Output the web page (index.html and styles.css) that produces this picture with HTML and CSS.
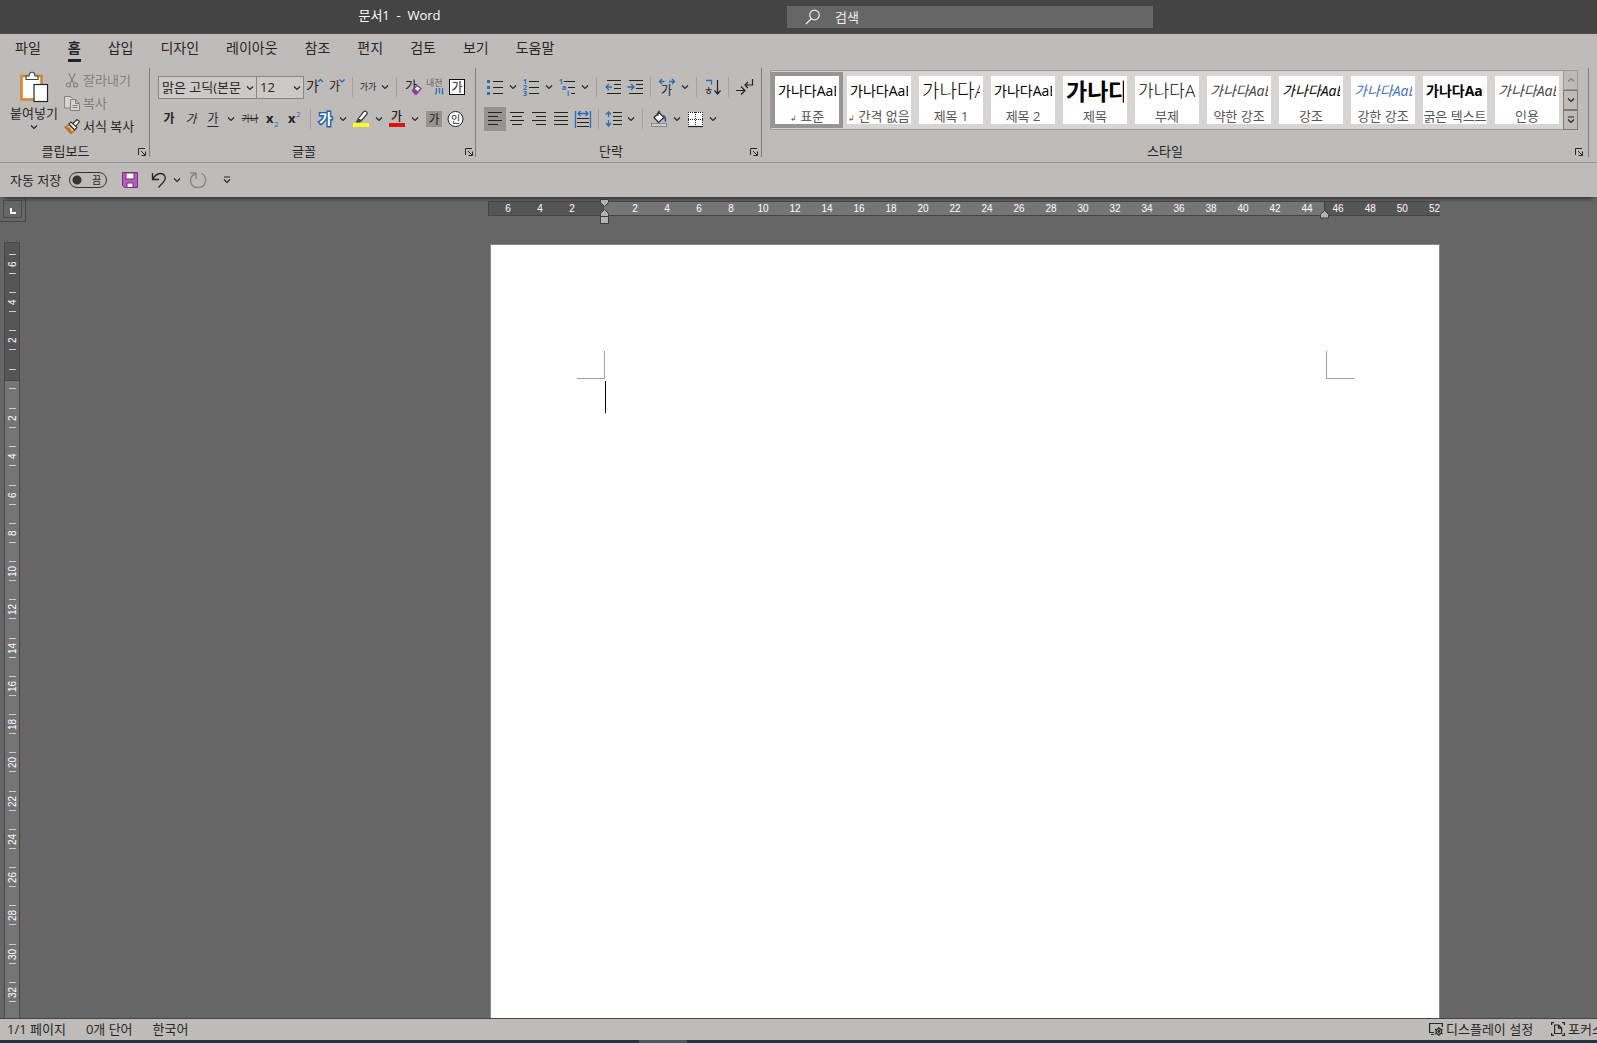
FILE: index.html
```html
<!DOCTYPE html>
<html lang="ko">
<head>
    <meta charset="UTF-8">
    <meta name="viewport" content="width=device-width, initial-scale=1.0">
    <title>문서1 - Word</title>
    <link rel="stylesheet" href="styles.css">
</head>
<body>
    <svg class="defs" aria-hidden="true">
        <symbol id="chev" viewBox="0 0 8 6"><path d="M1 1.500l3 3 3-3" fill="none" stroke="currentColor" stroke-width="1.200"/></symbol>
        <symbol id="more" viewBox="0 0 8 8"><path d="M1 1h6M1 3.500l3 3 3-3" fill="none" stroke="currentColor" stroke-width="1.200"/></symbol>
        <symbol id="launch" viewBox="0 0 8 8"><path d="M.5 7V.5H7M3 3l4 4M7.500 3.500v4h-4" fill="none" stroke="currentColor"/></symbol>
    </svg>

    <header class="titlebar">
        <h1 class="doc-title">문서1  -  Word</h1>
        <label class="search">
            <svg width="16" height="16" viewBox="0 0 16 16"><path d="M1 15l5.500-5.500" stroke="#eee" stroke-width="1.300"/><circle cx="9.500" cy="6" r="4.800" fill="none" stroke="#eee" stroke-width="1.200"/></svg>
            <input type="text" placeholder="검색" aria-label="검색">
        </label>
    </header>

    <nav class="tabs">
        <a href="#">파일</a>
        <a href="#" class="active">홈</a>
        <a href="#">삽입</a>
        <a href="#">디자인</a>
        <a href="#">레이아웃</a>
        <a href="#">참조</a>
        <a href="#">편지</a>
        <a href="#">검토</a>
        <a href="#">보기</a>
        <a href="#">도움말</a>
    </nav>

    <div class="ribbon">
        <!-- Clipboard -->
        <section class="group clipboard">
            <div class="clip-body">
                <button class="paste">
                    <svg width="30" height="32" viewBox="0 0 30 32">
                        <rect x="2.500" y="5" width="20" height="23.500" fill="#fff" stroke="#d9822b" stroke-width="2.500"/>
                        <path d="M7 8.500V5h3c0-5 6-5 6 0h3v3.500z" fill="#fff" stroke="#444" stroke-width="1.200"/>
                        <rect x="15" y="13.500" width="13.500" height="17" fill="#fff" stroke="#262626" stroke-width="1.200"/>
                    </svg>
                    <span>붙여넣기</span>
                    <svg class="chev"><use href="#chev"/></svg>
                </button>
                <div class="clip-list">
                    <button class="line-btn" disabled>
                        <svg width="16" height="16" viewBox="0 0 16 16" fill="none" stroke="#85817e" stroke-width="1.200"><path d="M4.500 1l5.500 10.500M11.500 1L6 11.500"/><circle cx="4.500" cy="13" r="2"/><circle cx="11.500" cy="13" r="2"/></svg>
                        잘라내기
                    </button>
                    <button class="line-btn" disabled>
                        <svg width="16" height="16" viewBox="0 0 16 16" fill="#d6d3d1" stroke="#85817e"><path d="M.5 1.500h6l2 2v9.500h-8z"/><path d="M6.500 4.500h5l4 4v7h-9zM11.500 4.500v4h4M8.500 10.500h5M8.500 12.500h5"/></svg>
                        복사
                    </button>
                    <button class="line-btn">
                        <svg width="16" height="16" viewBox="0 0 16 16"><path d="M1 9l4-2 6 5-4 3.500z" fill="#f2c492" stroke="#b8651b" stroke-width="1.200"/><path d="M1 9l6 6.500 1.500-1-3-5z" fill="#c8701c"/><path d="M5 6l2-2 6 5.500-2.500 2.500zM9 5.500L13 1.500l2.500 2L12 8" fill="#fff" stroke="#333" stroke-width="1.200"/></svg>
                        서식 복사
                    </button>
                </div>
            </div>
            <div class="group-label">클립보드<button class="launcher" aria-label="클립보드"><svg><use href="#launch"/></svg></button></div>
        </section>

        <!-- Font -->
        <section class="group font">
            <div class="row">
                <span class="combo font-name"><select aria-label="글꼴"><option>맑은 고딕(본문</option></select><svg class="chev"><use href="#chev"/></svg></span>
                <span class="combo font-size"><select aria-label="글꼴 크기"><option>12</option></select><svg class="chev"><use href="#chev"/></svg></span>
                <button class="btn"><svg width="18" height="18" viewBox="0 0 18 18"><text x="0" y="13" font-size="14">가</text><path d="M12 4l2.500-2.500L17 4" class="b"/></svg></button>
                <button class="btn"><svg width="18" height="18" viewBox="0 0 18 18"><text x="1" y="13" font-size="12">가</text><path d="M11.500 1.500L14 4l2.500-2.500" class="b"/></svg></button>
                <i class="sep"></i>
                <button class="btn narrow t-case">가가</button><button class="drop"><svg class="chev"><use href="#chev"/></svg></button>
                <i class="sep"></i>
                <button class="btn"><svg width="18" height="18" viewBox="0 0 18 18"><text x="1" y="12" font-size="13">가</text><path d="M8.500 12.500l4.500-5 4 3-4.500 5.500h-1.500z" fill="#fff" stroke="#8c3c9c" stroke-width="1.300"/><path d="M8.500 12.500l1.800-2 4 3-1.800 2.500h-1.500z" fill="#8c3c9c"/></svg></button>
                <button class="btn"><svg width="18" height="18" viewBox="0 0 18 18"><text x="0" y="8" font-size="9" class="soft">내천</text><path d="M10.500 10v4l-1 2.500M13.500 10v5.500M16.500 10v6.500" class="b"/></svg></button>
                <button class="btn"><svg width="18" height="18" viewBox="0 0 18 18"><rect x="1.500" y="1.500" width="15" height="15" fill="#fff" stroke="#111"/><text x="3.500" y="13.500" font-size="12">가</text></svg></button>
            </div>
            <div class="row">
                <button class="btn t-bold">가</button>
                <button class="btn t-italic">가</button>
                <button class="btn t-under">가</button><button class="drop"><svg class="chev"><use href="#chev"/></svg></button>
                <button class="btn wide t-strike">가나</button>
                <button class="btn"><svg width="18" height="18" viewBox="0 0 18 18"><text x="2" y="13" font-size="13" font-weight="700">x</text><text x="10" y="17" font-size="8" class="bt">2</text></svg></button>
                <button class="btn"><svg width="18" height="18" viewBox="0 0 18 18"><text x="2" y="13" font-size="13" font-weight="700">x</text><text x="10" y="7" font-size="8" class="bt">2</text></svg></button>
                <i class="sep"></i>
                <button class="btn narrow"><svg width="18" height="18" viewBox="0 0 18 18"><text x="2" y="14" font-size="14" font-weight="700" class="glow">가</text></svg></button><button class="drop"><svg class="chev"><use href="#chev"/></svg></button>
                <button class="btn"><svg width="18" height="18" viewBox="0 0 18 18"><path d="M6 9l6-7.500c1-1 4 .5 3 2.500L9.500 10.500z" fill="#fff" stroke="#333" stroke-width="1.200"/><path d="M6 8.500l3.500 2.500-1.500 1.500H3.500z" fill="#444"/><rect x="1" y="13" width="16" height="4" fill="#ff2"/></svg></button><button class="drop"><svg class="chev"><use href="#chev"/></svg></button>
                <button class="btn"><svg width="18" height="18" viewBox="0 0 18 18"><text x="3" y="11" font-size="12" font-weight="500">가</text><rect x="1" y="13" width="16" height="4" fill="#e01010"/></svg></button><button class="drop"><svg class="chev"><use href="#chev"/></svg></button>
                <button class="btn"><svg width="18" height="18" viewBox="0 0 18 18"><rect x="2" y="1" width="16" height="16" fill="#979391"/><text x="4.500" y="13.500" font-size="12">가</text></svg></button>
                <button class="btn"><svg width="18" height="18" viewBox="0 0 18 18"><circle cx="9.500" cy="9" r="7.500" fill="#fff" stroke="#222"/><text x="5" y="12.500" font-size="10">인</text></svg></button>
            </div>
            <div class="group-label">글꼴<button class="launcher" aria-label="글꼴"><svg><use href="#launch"/></svg></button></div>
        </section>

        <!-- Paragraph -->
        <section class="group para">
            <div class="row">
                <button class="btn"><svg width="18" height="18" viewBox="0 0 18 18"><path d="M7 3.500h10M7 9.500h10M7 15.500h10" class="k"/><path d="M1 2h3v3H1zM1 8h3v3H1zM1 14h3v3H1z" fill="#2b6cb8"/></svg></button><button class="drop"><svg class="chev"><use href="#chev"/></svg></button>
                <button class="btn"><svg width="18" height="18" viewBox="0 0 18 18"><path d="M7 3.500h10M7 9.500h10M7 15.500h10" class="k"/><g class="bt" font-size="7" font-weight="700"><text x="1" y="6">1</text><text x="1" y="12">2</text><text x="1" y="18">3</text></g></svg></button><button class="drop"><svg class="chev"><use href="#chev"/></svg></button>
                <button class="btn"><svg width="18" height="18" viewBox="0 0 18 18"><path d="M6 3.500h11M10 9.500h7M13 15.500h4" class="k"/><g class="bt" font-size="7" font-weight="700"><text x="1" y="6">1</text><text x="4" y="12">a</text><text x="9" y="18">i</text></g></svg></button><button class="drop"><svg class="chev"><use href="#chev"/></svg></button>
                <i class="sep"></i>
                <button class="btn"><svg width="18" height="18" viewBox="0 0 18 18"><path d="M3 2.500h14M10 6.500h7M10 10.500h7M3 15.500h14" class="k"/><path d="M8 9H2.500M5 6L2 9l3 3" class="b"/></svg></button>
                <button class="btn"><svg width="18" height="18" viewBox="0 0 18 18"><path d="M3 2.500h14M10 6.500h7M10 10.500h7M3 15.500h14" class="k"/><path d="M1.500 9h6M5 6l3 3-3 3" class="b"/></svg></button>
                <i class="sep"></i>
                <button class="btn"><svg width="18" height="18" viewBox="0 0 18 18"><text x="3" y="17" font-size="12">가</text><path d="M6.500 3.500H1.500M4 1L1.500 3.500 4 6M11 3.500h5.500M14 1l2.500 2.500L14 6" class="b"/></svg></button><button class="drop"><svg class="chev"><use href="#chev"/></svg></button>
                <i class="sep"></i>
                <button class="btn"><svg width="18" height="18" viewBox="0 0 18 18"><path d="M2 2.500h5.500v4" class="b"/><text x="0" y="17" font-size="10">ㅎ</text><path d="M13.500 2v14M10.500 12.500l3 3.500 3-3.500" class="k"/></svg></button>
                <i class="sep"></i>
                <button class="btn"><svg width="18" height="18" viewBox="0 0 18 18"><path d="M0 12.500h8M5 8.500l4 4-4 4M16.500 1v6H9M12 4L9 7l3 3" class="k"/></svg></button>
            </div>
            <div class="row">
                <button class="btn on"><svg width="18" height="18" viewBox="0 0 18 18"><path d="M2 2.500h14M2 6.500h10M2 10.500h14M2 14.500h10" class="k"/></svg></button>
                <button class="btn"><svg width="18" height="18" viewBox="0 0 18 18"><path d="M2 2.500h14M4 6.500h10M2 10.500h14M4 14.500h10" class="k"/></svg></button>
                <button class="btn"><svg width="18" height="18" viewBox="0 0 18 18"><path d="M2 2.500h14M6 6.500h10M2 10.500h14M6 14.500h10" class="k"/></svg></button>
                <button class="btn"><svg width="18" height="18" viewBox="0 0 18 18"><path d="M2 2.500h14M2 6.500h14M2 10.500h14M2 14.500h14" class="k"/></svg></button>
                <button class="btn"><svg width="18" height="18" viewBox="0 0 18 18"><path d="M3 8.500h12M3 12.500h12M3 16.500h12" class="k"/><path d="M1.500 1v17M16.500 1v17M4 3.500h10M6.500 1L4 3.500 6.500 6M11.500 1L14 3.500 11.500 6" class="b"/></svg></button>
                <i class="sep"></i>
                <button class="btn narrow"><svg width="18" height="18" viewBox="0 0 18 18"><path d="M8 2.500h9M8 6.500h9M8 10.500h9M8 14.500h9" class="k"/><path d="M3.500 2v5M1 4.500L3.500 2 6 4.500M3.500 10v6M1 13l2.500 3L6 13" class="b"/></svg></button><button class="drop"><svg class="chev"><use href="#chev"/></svg></button>
                <i class="sep"></i>
                <button class="btn"><svg width="18" height="18" viewBox="0 0 18 18"><path d="M4 7.500l5-5 5 5-5.500 5z" fill="#fff" stroke="#222" stroke-width="1.200"/><path d="M8 6V2.500c0-2 2-2 2 0" fill="none" stroke="#222"/><path d="M13 6c2 0 2.500 2 2.500 5.500" fill="none" stroke="#2b5ca0" stroke-width="1.800"/><rect x="1.500" y="13.500" width="15" height="3" fill="#ccc" stroke="#888"/></svg></button><button class="drop"><svg class="chev"><use href="#chev"/></svg></button>
                <button class="btn"><svg width="18" height="18" viewBox="0 0 18 18"><path d="M2 2h15v15H2z" fill="#fff"/><path d="M2 2.500h15M2 9.500h15M2.500 2v14M9.500 2v14M16.500 2v14" stroke="#222" stroke-dasharray="1 1"/><path d="M2 16.500h15" class="k"/></svg></button><button class="drop"><svg class="chev"><use href="#chev"/></svg></button>
            </div>
            <div class="group-label">단락<button class="launcher" aria-label="단락"><svg><use href="#launch"/></svg></button></div>
        </section>

        <!-- Styles -->
        <section class="group styles">
            <div class="gallery">
                <button class="style selected"><span class="sample">가나다AaBb</span><span class="name"><small>↲</small> 표준</span></button>
                <button class="style"><span class="sample">가나다AaBb</span><span class="name"><small>↲</small> 간격 없음</span></button>
                <button class="style"><span class="sample s-h1">가나다AaBb</span><span class="name">제목 1</span></button>
                <button class="style"><span class="sample">가나다AaBb</span><span class="name">제목 2</span></button>
                <button class="style"><span class="sample s-title">가나다AaBb</span><span class="name">제목</span></button>
                <button class="style"><span class="sample s-sub">가나다AaBb</span><span class="name">부제</span></button>
                <button class="style"><span class="sample s-em grey">가나다AaBb</span><span class="name">약한 강조</span></button>
                <button class="style"><span class="sample s-em">가나다AaBb</span><span class="name">강조</span></button>
                <button class="style"><span class="sample s-em blue">가나다AaBb</span><span class="name">강한 강조</span></button>
                <button class="style"><span class="sample s-strong">가나다AaBb</span><span class="name">굵은 텍스트</span></button>
                <button class="style"><span class="sample s-em grey">가나다AaBb</span><span class="name">인용</span></button>
                <div class="scroller">
                    <button disabled aria-label="위로"><svg class="chev up"><use href="#chev"/></svg></button>
                    <button aria-label="아래로"><svg class="chev"><use href="#chev"/></svg></button>
                    <button aria-label="자세히"><svg class="more"><use href="#more"/></svg></button>
                </div>
            </div>
            <div class="group-label">스타일<button class="launcher" aria-label="스타일"><svg><use href="#launch"/></svg></button></div>
        </section>
    </div>

    <div class="quick">
        <label class="autosave">자동 저장
            <span class="toggle"><input type="checkbox"><span>끔</span></span>
        </label>
        <button class="q-btn q-save" aria-label="저장"><svg width="16" height="16" viewBox="0 0 16 16"><path d="M.5.500h15v15h-13l-2-2z" fill="#b65cc0" stroke="#74307c"/><path d="M4 1h8v6H4z" fill="#fff" stroke="#74307c"/><path d="M5 11h6v4.500H5z" fill="#fff" stroke="#74307c"/></svg></button>
        <button class="q-btn" aria-label="실행 취소"><svg width="16" height="16" viewBox="0 0 16 16"><path d="M1.500 1v6.500H8M1.500 7.500C5 1 11 0 13.500 3.500c2.500 4-1.500 7-6 12" fill="none" stroke="#262626" stroke-width="1.300"/></svg></button>
        <button class="drop" aria-label="실행 취소 목록"><svg class="chev"><use href="#chev"/></svg></button>
        <button class="q-btn q-redo" disabled aria-label="다시 실행"><svg width="18" height="18" viewBox="0 0 18 18"><path d="M1 2h6v6M6.500 2.500C-1 6 .5 16.500 9 16.500c8.500 0 10-10.500 3.500-14" fill="none" stroke="#8a8684" stroke-width="1.400"/></svg></button>
        <button class="drop" aria-label="사용자 지정"><svg class="more"><use href="#more"/></svg></button>
    </div>

    <main class="workspace">
        <aside class="side">
            <button class="tab-stop" aria-label="탭"><svg width="6" height="6" viewBox="0 0 6 6"><path d="M1 0v5h5" fill="none" stroke="#fff" stroke-width="2"/></svg></button>
            <div class="vruler">
                <div class="v-margin">
                    <b><i>6</i></b><b><i>4</i></b><b><i>2</i></b><u></u>
                </div>
                <div class="v-text">
                    <u></u>
                    <b><i>2</i></b><b><i>4</i></b><b><i>6</i></b><b><i>8</i></b><b><i>10</i></b><b><i>12</i></b><b><i>14</i></b><b><i>16</i></b>
                    <b><i>18</i></b><b><i>20</i></b><b><i>22</i></b><b><i>24</i></b><b><i>26</i></b><b><i>28</i></b><b><i>30</i></b><b><i>32</i></b>
                </div>
            </div>
        </aside>
        <div class="canvas">
            <div class="hruler">
                <div class="h-left"><b>6</b><b>4</b><b>2</b></div>
                <div class="h-text">
                    <b>2</b><b>4</b><b>6</b><b>8</b><b>10</b><b>12</b><b>14</b><b>16</b><b>18</b><b>20</b><b>22</b>
                    <b>24</b><b>26</b><b>28</b><b>30</b><b>32</b><b>34</b><b>36</b><b>38</b><b>40</b><b>42</b><b>44</b>
                    <svg class="indent-left" width="9" height="26" viewBox="0 0 9 26" fill="#b5b2b0" stroke="#3c3c3c"><path d="M.5.500h8v3l-4 4-4-4zM.5 17.500v-3l4-4 4 4v3zM.5 17.500h8v7h-8z"/></svg>
                    <svg class="indent-right" width="9" height="9" viewBox="0 0 9 9" fill="#b5b2b0" stroke="#3c3c3c"><path d="M.5 8v-3.500l4-4 4 4V8z"/></svg>
                </div>
                <div class="h-right"><b>46</b><b>48</b><b>50</b><b>52</b></div>
            </div>
            <article class="page">
                <div class="crops"><i class="crop tl"></i><i class="crop tr"></i></div>
                <div class="caret"></div>
            </article>
        </div>
    </main>

    <footer class="status">
        <span>1/1 페이지</span>
        <span>0개 단어</span>
        <span>한국어</span>
        <button class="st-btn st-display"><svg width="14" height="14" viewBox="0 0 14 14" fill="none" stroke="#262626" stroke-width="1.200"><path d="M5 10.500H.6V1.500h12.800V5M2 12.500h3"/><circle cx="9.800" cy="9.500" r="2.800"/><circle cx="9.800" cy="9.500" r=".8"/><path d="M9.800 5v1.500M9.800 12.500V14M6 7.200l1.500 1M12 11l1.500 1M13.500 7.200l-1.500 1M7.500 11L6 12"/></svg>디스플레이 설정</button>
        <button class="st-btn st-focus"><svg width="14" height="14" viewBox="0 0 14 14" fill="none" stroke="#262626" stroke-width="1.200"><path d="M3 .6H.6V3M11 .6h2.400V3M3 13.400H.6V11M11 13.400h2.400V11M3.600 3h4l3 3v5.500h-7zM7.500 3v3.200h3"/></svg>포커스</button>
    </footer>
    <div class="taskbar"><i></i></div>
</body>
</html>
```

FILE: styles.css
```css
* {
    box-sizing: border-box;
}

body {
    margin: 0;
    height: 100vh;
    display: flex;
    flex-direction: column;
    overflow: hidden;
    background-color: #666;
    color: #262626;
    font-family: "Open Sans", "Noto Sans CJK KR", sans-serif;
    font-size: 13px;
    line-height: 18px;
}

button, input, select {
    margin: 0;
    padding: 0;
    border: none;
    background: none;
    color: inherit;
    font: inherit;
}

svg {
    display: block;
    flex: none;
}

.defs {
    position: absolute;
    width: 0;
    height: 0;
}

.chev {
    width: 8px;
    height: 6px;
}

.more, .launcher svg {
    width: 8px;
    height: 8px;
}

/* title bar */
.titlebar {
    flex: none;
    display: grid;
    grid-template-columns: 787fr 366fr 444fr;
    align-items: start;
    height: 34px;
    padding-top: 6px;
    background-color: #444;
    border-bottom: 1px solid #514846;
    color: #fff;
}

.doc-title {
    margin: 0;
    padding-left: 12px;
    font-size: 13px;
    font-weight: 400;
    line-height: 18px;
    text-align: center;
    white-space: pre;
}

.search {
    display: flex;
    align-items: center;
    gap: 14px;
    height: 22px;
    padding-left: 18px;
    background-color: #666;
}

.search input {
    flex: 1;
    min-width: 0;
    height: 20px;
}

.search input::placeholder {
    color: #eee;
}

/* ribbon tabs */
.tabs {
    flex: none;
    display: flex;
    gap: 27px;
    height: 32px;
    padding: 4px 15px 0;
    background-color: #bfbbb8;
    font-size: 14px;
    line-height: 20px;
}

.tabs a {
    height: 24px;
    color: inherit;
    text-decoration: none;
    white-space: nowrap;
}

.tabs .active {
    border-bottom: 3px solid #222;
    font-weight: 700;
}

/* ribbon */
.ribbon {
    flex: none;
    display: flex;
    height: 97px;
    padding: 2px 0 5px;
    background-color: #bfbbb8;
    border-bottom: 1px solid #999593;
}

.group {
    flex: none;
    display: flex;
    flex-direction: column;
    gap: 8px;
    padding: 7px 8px 0;
    border-right: 1px solid #7d7977;
}

.group-label {
    position: relative;
    margin: auto -8px 0;
    padding-right: 18px;
    line-height: 10px;
    height: 11px;
    text-align: center;
}

.launcher {
    position: absolute;
    right: 3px;
    bottom: 1px;
}

.clipboard {
    width: 150px;
    padding-top: 0;
}

.font {
    padding-right: 7px;
}

.para {
    padding-right: 5px;
}

.para .launcher {
    right: 6px;
}

.clip-body {
    display: flex;
    gap: 4px;
}

.paste {
    display: flex;
    flex-direction: column;
    align-items: center;
    width: 52px;
    padding-top: 3px;
    white-space: nowrap;
}

.paste span {
    line-height: 20px;
}

.paste .chev {
    margin-top: 1px;
}

.clip-list {
    display: flex;
    flex-direction: column;
}

.line-btn {
    display: flex;
    align-items: center;
    gap: 3px;
    height: 23px;
    white-space: nowrap;
}

.line-btn:disabled {
    color: #85817e;
}

.row {
    display: flex;
    align-items: center;
    height: 24px;
}

.btn {
    flex: none;
    display: flex;
    align-items: center;
    justify-content: center;
    width: 22px;
    height: 24px;
    white-space: nowrap;
}

.btn.narrow {
    width: 20px;
}

.btn.wide {
    width: 24px;
}

.btn.on {
    background-color: #979391;
}

.btn text {
    fill: #222;
}

.btn .soft {
    fill: #666;
}

.btn .glow {
    fill: #fff;
    stroke: #2064ae;
    stroke-width: 3px;
    paint-order: stroke;
}

.btn .bt, .btn .bt text {
    fill: #2b6cb8;
}

.b {
    fill: none;
    stroke: #2b6cb8;
    stroke-width: 1.3;
}

.k {
    fill: none;
    stroke: #222;
    stroke-width: 1.2;
}

.drop {
    flex: none;
    display: flex;
    align-items: center;
    justify-content: center;
    width: 14px;
    height: 24px;
}

.sep {
    flex: none;
    width: 1px;
    height: 20px;
    margin: 0 5px 0 4px;
    background-color: #a5a19f;
}

.t-case {
    font-size: 9px;
}

.t-bold {
    font-size: 12px;
    font-weight: 700;
}

.t-italic {
    font-size: 12px;
    font-style: italic;
}

.t-under {
    font-size: 12px;
    text-decoration: underline;
    text-underline-offset: 3px;
}

.t-strike {
    font-size: 9px;
    text-decoration: line-through;
}

.combo {
    position: relative;
    flex: none;
    height: 23px;
    border: 1px solid #8a8684;
    background-color: #ccc9c7;
}

.combo select {
    display: block;
    width: 100%;
    height: 100%;
    padding-left: 3px;
    appearance: none;
}

.combo .chev {
    position: absolute;
    right: 2px;
    top: 8px;
}

.font-name {
    width: 99px;
}

.font-size {
    width: 47px;
    border-left: none;
}

/* style gallery */
.styles {
    padding-top: 2px;
    padding-right: 10px;
}

.gallery {
    display: flex;
    height: 60px;
    border: 1px solid #9d9997;
    background-color: #d6d5d4;
}

.style {
    display: flex;
    flex-direction: column;
    width: 72px;
    height: 56px;
    margin-top: 1px;
    border: 4px solid transparent;
    background-color: #fff;
    background-clip: padding-box;
    overflow: hidden;
    white-space: nowrap;
}

.style.selected {
    border-color: #979593;
}

.sample {
    flex: none;
    width: 58px;
    height: 30px;
    margin: 0 3px;
    overflow: hidden;
    color: #000;
    font-size: 14px;
    line-height: 30px;
    text-align: left;
}

.s-h1 {
    font-size: 19px;
    font-weight: 300;
}

.s-title {
    font-size: 23px;
    font-weight: 700;
}

.s-sub {
    font-size: 17px;
    font-weight: 300;
}

.s-em {
    font-style: italic;
}

.s-strong {
    font-weight: 700;
}

.grey {
    color: #444;
}

.blue {
    color: #4472c4;
}

.name {
    align-self: center;
    height: 18px;
    line-height: 20px;
    color: #555;
}

.name small {
    font-size: 8px;
}

.scroller {
    display: flex;
    flex-direction: column;
    width: 15px;
    margin: -1px -1px -1px 0;
    background-color: #bfbbb8;
}

.scroller button {
    flex: 1;
    display: flex;
    align-items: center;
    justify-content: center;
    border: 1px solid #7d7977;
}

.scroller button:disabled {
    border-color: #9d9997;
    color: #85817e;
}

.up {
    transform: rotate(180deg);
}

/* quick access bar */
.quick {
    position: relative;
    z-index: 1;
    flex: none;
    display: flex;
    align-items: center;
    height: 34px;
    padding: 0 0 1px 10px;
    background-color: #bfbbb8;
    box-shadow: 0 5px 5px -4px #222;
}

.autosave {
    display: flex;
    align-items: center;
    gap: 8px;
}

.toggle {
    position: relative;
}

.toggle input {
    display: block;
    width: 38px;
    height: 16px;
    border: 1px solid #333;
    border-radius: 8px;
    appearance: none;
    background: radial-gradient(circle at 7px 7px, #333 4px, transparent 5px);
}

.toggle span {
    position: absolute;
    right: 6px;
    top: 0;
    font-size: 10px;
    line-height: 16px;
}

.q-btn {
    display: flex;
    justify-content: center;
    width: 22px;
}

.q-save {
    margin: 0 7px 0 12px;
}

.q-redo {
    margin: 0 11px 0 3px;
}

/* document area */
.workspace {
    flex: 1;
    min-height: 0;
    display: flex;
}

.side {
    flex: none;
    display: flex;
    flex-direction: column;
    width: 26px;
}

.tab-stop {
    position: relative;
    display: flex;
    align-items: center;
    justify-content: center;
    height: 25px;
    padding-top: 4px;
    border: solid #474747;
    border-width: 0 1px 1px 0;
}

.tab-stop::after {
    content: "";
    position: absolute;
    inset: 3px;
    border: 1px solid #4c4c4c;
}

.vruler {
    flex: 1;
    min-height: 0;
    display: flex;
    flex-direction: column;
    width: 16px;
    margin: 20px 0 0 4px;
    border: 1px solid #474747;
    border-bottom: none;
    color: #fff;
    font-family: "Liberation Sans", sans-serif;
    font-size: 10px;
    line-height: 10px;
}

.v-margin, .v-text {
    display: flex;
    flex-direction: column;
    align-items: center;
}

.v-margin {
    height: 138px;
    padding-top: 2px;
    background-color: #555;
    border-bottom: 1px solid #474747;
}

.v-text {
    flex: 1;
    min-height: 0;
    padding-bottom: 7px;
    background-color: #757575;
}

.vruler b {
    flex: 1;
    display: flex;
    align-items: center;
    justify-content: center;
    font-weight: 400;
}

.v-margin b {
    flex: none;
    height: 38px;
}

.vruler i {
    display: flex;
    align-items: center;
    justify-content: center;
    width: 7px;
    height: 20px;
    border: solid #ccc;
    border-width: 1px 0;
    font-style: normal;
    writing-mode: vertical-rl;
    transform: rotate(180deg);
}

.vruler u {
    flex: none;
    width: 7px;
    height: 1px;
    margin-top: 10px;
    background-color: #ccc;
}

.v-text u {
    margin: 7px 0 10px;
}

.canvas {
    flex: 1;
    min-width: 0;
    display: flex;
    flex-direction: column;
    padding: 4px 0 0 462px;
}

.hruler {
    position: relative;
    z-index: 2;
    flex: none;
    display: flex;
    width: 952px;
    height: 15px;
    color: #fff;
    font-family: "Liberation Sans", sans-serif;
    font-size: 10px;
    line-height: 13px;
}

.hruler > div {
    display: flex;
    border: solid #444;
    border-width: 1px 0;
    background-color: #555;
}

.hruler b {
    flex: none;
    width: 32px;
    font-weight: 400;
    text-align: center;
}

.hruler .h-left {
    width: 116px;
    justify-content: flex-end;
    padding-right: 16px;
    border-left-width: 1px;
}

.hruler .h-text {
    position: relative;
    flex: 1;
    padding-left: 15px;
    background-color: #757575;
}

.hruler .h-right {
    width: 116px;
    justify-content: flex-end;
    gap: 21px;
    border-left-width: 1px;
}

.hruler .h-right b {
    width: auto;
}

.indent-left {
    position: absolute;
    left: -4px;
    top: -3px;
}

.indent-right {
    position: absolute;
    right: -5px;
    top: 8px;
}

.page {
    flex: 1;
    width: 950px;
    margin: 28px 0 0 2px;
    padding: 106px 85px 0 86px;
    background-color: #fff;
    border: solid #8a8a8a;
    border-width: 1px 1px 0;
}

.crops {
    display: flex;
    justify-content: space-between;
}

.crop {
    width: 28px;
    height: 28px;
    border: 0 solid #a0a0a0;
    border-bottom-width: 1px;
}

.tl {
    border-right-width: 1px;
}

.tr {
    border-left-width: 1px;
}

.caret {
    width: 1px;
    height: 32px;
    margin: 2px 0 0 28px;
    background-color: #000;
}

/* status bar */
.status {
    flex: none;
    display: flex;
    align-items: center;
    gap: 20px;
    height: 22px;
    padding: 0 0 2px 7px;
    border-top: 1px solid #444;
    background-color: #bfbbb8;
    overflow: hidden;
    white-space: nowrap;
}

.st-btn {
    display: flex;
    align-items: center;
    gap: 3px;
}

.st-display {
    margin-left: auto;
}

.st-focus {
    margin: 0 -7px 0 -2px;
}

.taskbar {
    flex: none;
    height: 3px;
    background-color: #22343f;
}

.taskbar i {
    display: block;
    width: 3%;
    height: 3px;
    margin-left: 40%;
    background-color: #4a5a64;
}
```
